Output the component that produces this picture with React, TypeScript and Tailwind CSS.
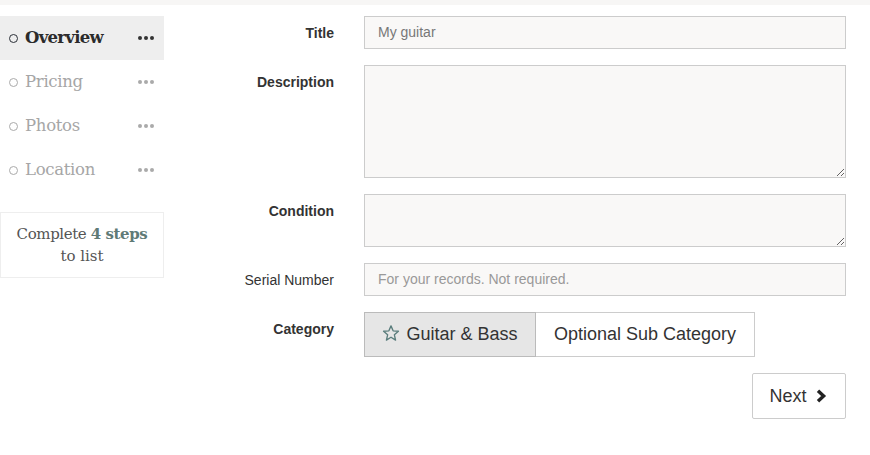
import React from "react";

const slab = { fontFamily: '"DejaVu Serif", "Liberation Serif", serif' };
const sans = { fontFamily: '"Liberation Sans", Arial, sans-serif' };

function NavItem({ label, active }: { label: string; active?: boolean }) {
  return (
    <div
      className={`flex items-center h-[44px] pl-[9px] pr-[10px] ${active ? "bg-[#eeeeee]" : ""}`}
    >
      <span
        className={`w-[9px] h-[9px] rounded-full border-[1.5px] ${active ? "border-[#2b3038]" : "border-[#aaa]"}`}
      />
      <span
        className={`ml-[7px] text-[16.5px] ${active ? "text-[#2b2b2b] font-bold tracking-[-0.7px]" : "text-[#a6a6a6] tracking-[-0.3px]"}`}
        style={slab}
      >
        {label}
      </span>
      <span className="ml-auto flex gap-[2px]">
        {[0, 1, 2].map((i) => (
          <span
            key={i}
            className={`w-[4px] h-[4px] rounded-full ${active ? "bg-[#333]" : "bg-[#aaa]"}`}
          />
        ))}
      </span>
    </div>
  );
}

function Row({
  label,
  bold = true,
  children,
}: {
  label: string;
  bold?: boolean;
  children: React.ReactNode;
}) {
  return (
    <div className="flex items-start">
      <div
        className={`w-[200px] pr-[30px] pt-[7px] text-right text-[14px] text-[#333] ${bold ? "font-bold" : ""}`}
        style={sans}
      >
        {label}
      </div>
      <div className="w-[482px]">{children}</div>
    </div>
  );
}

export default function App() {
  return (
    <div className="w-[870px] h-[455px] bg-white overflow-hidden">
      <div className="h-[5px] bg-[#f7f6f5]" />
      <div className="flex pt-[11px]">
        <div className="w-[164px] shrink-0">
          <NavItem label="Overview" active />
          <NavItem label="Pricing" />
          <NavItem label="Photos" />
          <NavItem label="Location" />
          <div
            className="mt-[20px] h-[66px] border border-[#eeeeee] flex flex-col items-center justify-center text-[15px] leading-[22px] text-[#555]"
            style={slab}
          >
            <div className="tracking-[-0.4px]">
              Complete <span className="font-bold text-[#5f7a76]">4 steps</span>
            </div>
            <div>to list</div>
          </div>
        </div>
        <div className="flex flex-col gap-[16px]">
          <Row label="Title">
            <div
              className="h-[33px] border border-[#ccc] bg-[#f9f8f7] flex items-center px-[13px] text-[14px] text-[#777]"
              style={sans}
            >
              My guitar
            </div>
          </Row>
          <Row label="Description">
            <textarea className="block w-full h-[113px] border border-[#ccc] bg-[#f9f8f7] outline-none" />
          </Row>
          <Row label="Condition">
            <textarea className="block w-full h-[53px] border border-[#ccc] bg-[#f9f8f7] outline-none" />
          </Row>
          <Row label="Serial Number" bold={false}>
            <div
              className="h-[33px] border border-[#ccc] bg-[#f9f8f7] flex items-center px-[13px] text-[14px] text-[#999]"
              style={sans}
            >
              For your records. Not required.
            </div>
          </Row>
          <Row label="Category">
            <div className="flex">
              <div
                className="h-[45px] w-[172px] border border-[#bbb] bg-[#e6e6e6] flex items-center justify-center text-[18px] text-[#333]"
                style={sans}
              >
                <svg width="18" height="18" viewBox="0 0 24 24" className="mr-[6px] -mt-[3px]">
                  <path
                    d="M12 2.5l2.8 6.6 7.1.6-5.4 4.7 1.6 7-6.1-3.7-6.1 3.7 1.6-7L2.1 9.7l7.1-.6z"
                    fill="none"
                    stroke="#5a7d7c"
                    strokeWidth="1.8"
                    strokeLinejoin="round"
                  />
                </svg>
                Guitar &amp; Bass
              </div>
              <div
                className="h-[45px] w-[219px] border border-l-0 border-[#ccc] bg-white flex items-center justify-center text-[18px] text-[#333]"
                style={sans}
              >
                Optional Sub Category
              </div>
            </div>
          </Row>
          <div className="flex justify-end">
            <div
              className="h-[46px] w-[94px] border border-[#ccc] rounded-[2px] flex items-center justify-center pr-[2px] text-[18px] text-[#333]"
              style={sans}
            >
              Next
              <svg width="12" height="14" viewBox="0 0 12 14" className="ml-[8px]">
                <polyline
                  points="3,1.8 8.6,7 3,12.2"
                  fill="none"
                  stroke="#222"
                  strokeWidth="3.4"
                  strokeLinecap="butt"
                  strokeLinejoin="miter"
                />
              </svg>
            </div>
          </div>
        </div>
      </div>
    </div>
  );
}
